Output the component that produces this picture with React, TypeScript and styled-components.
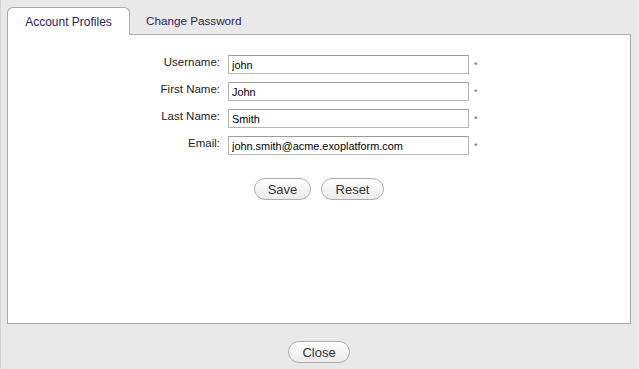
import React from "react";
import styled, { createGlobalStyle } from "styled-components";

const Global = createGlobalStyle`
  html, body { margin: 0; padding: 0; background: #e9e9e9; }
  * { box-sizing: border-box; }
`;

const FONT = `"Liberation Sans", Arial, sans-serif`;

const Window = styled.div`
  width: 639px;
  height: 369px;
  background: #e9e9e9;
  border-left: 1px solid #d4d4d4;
  border-right: 1px solid #f4f4f4;
  padding: 7px 7px 0 6px;
  display: flex;
  flex-direction: column;
  font-family: ${FONT};
`;

const TabBar = styled.div`
  display: flex;
  height: 27px;
  align-items: flex-end;
  position: relative;
  z-index: 1;
`;

const Tab = styled.div<{ $active?: boolean }>`
  height: ${(p) => (p.$active ? "28px" : "27px")};
  margin-bottom: ${(p) => (p.$active ? "-1px" : "0")};
  padding: ${(p) => (p.$active ? "1px 0 0" : "0 0 2px 15px")};
  display: flex;
  align-items: center;
  white-space: nowrap;
  font-size: ${(p) => (p.$active ? "12px" : "11.7px")};
  color: #2b1d5c;
  background: ${(p) => (p.$active ? "#fff" : "transparent")};
  border: 1px solid ${(p) => (p.$active ? "#a9a9a9" : "transparent")};
  border-bottom: none;
  border-radius: 6px 6px 0 0;
  width: ${(p) => (p.$active ? "123px" : "auto")};
  justify-content: ${(p) => (p.$active ? "center" : "flex-start")};
`;

const Panel = styled.div`
  height: 290px;
  background: #fff;
  border: 1px solid #a9a9a9;
  display: flex;
  flex-direction: column;
  align-items: stretch;
  padding-top: 20px;
`;

const Form = styled.div`
  display: grid;
  grid-template-columns: 212px 241px auto;
  column-gap: 8px;
  row-gap: 8px;
  align-items: center;
`;

const Label = styled.label`
  text-align: right;
  font-size: 11.5px;
  color: #222;
  padding-bottom: 5px;
`;

const Input = styled.input`
  height: 19px;
  width: 241px;
  border: 1px solid #b5b5b5;
  border-top-color: #9c9c9c;
  padding: 1px 3px 0;
  font-family: ${FONT};
  font-size: 10.9px;
  color: #000;
  outline: none;
`;

const Star = styled.span`
  font-size: 9px;
  color: #666;
  margin-left: -3px;
`;

const Actions = styled.div`
  display: flex;
  justify-content: center;
  gap: 10px;
  margin-top: 23px;
`;

const Button = styled.button<{ $w: number }>`
  width: ${(p) => p.$w}px;
  height: 22px;
  border-radius: 11px;
  border: 1px solid #aeaeae;
  background: linear-gradient(#ffffff, #ebebeb);
  font-family: ${FONT};
  font-size: 13px;
  color: #333;
  padding: 0;
`;

const Footer = styled.div`
  flex: 1;
  display: flex;
  justify-content: center;
  padding-top: 17px;
`;

const fields = [
  ["Username:", "john"],
  ["First Name:", "John"],
  ["Last Name:", "Smith"],
  ["Email:", "john.smith@acme.exoplatform.com"],
];

export default function App() {
  return (
    <>
      <Global />
      <Window>
        <TabBar>
          <Tab $active>Account Profiles</Tab>
          <Tab>Change Password</Tab>
        </TabBar>
        <Panel>
          <Form>
            {fields.map(([l, v]) => (
              <React.Fragment key={l}>
                <Label>{l}</Label>
                <Input defaultValue={v} />
                <Star>*</Star>
              </React.Fragment>
            ))}
          </Form>
          <Actions>
            <Button $w={57}>Save</Button>
            <Button $w={63}>Reset</Button>
          </Actions>
        </Panel>
        <Footer>
          <Button $w={62}>Close</Button>
        </Footer>
      </Window>
    </>
  );
}
